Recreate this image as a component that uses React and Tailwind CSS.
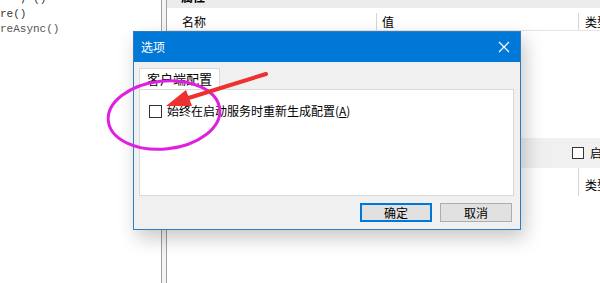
export default function App() {
  const cjk = { fontFamily: '"Noto Sans CJK SC", "Noto Sans", sans-serif' }

  return (
    <div
      className="relative w-[600px] h-[283px] overflow-hidden bg-white flex text-[12px] text-black"
      style={cjk}
    >
      {/* code editor */}
      <div className="w-[161px] shrink-0 bg-white pt-[4px] font-['Liberation_Mono',monospace] text-[11px] leading-[15px] text-[#333]">
        <div className="-mt-[12px] h-[15px] pl-[20px]">    ;   ()</div>
        <div className="h-[15px]">re()</div>
        <div className="h-[15px] text-[#555]">reAsync()</div>
      </div>

      {/* splitter */}
      <div className="w-[6px] shrink-0 border-x border-[#a0a0a0] bg-[#f4f4f4]" />

      {/* properties panel */}
      <div className="flex-1 min-w-0 flex flex-col bg-white overflow-hidden whitespace-nowrap">
        <div className="h-[8px] bg-[#ececec] overflow-hidden">
          <div className="-mt-[12px] pl-[14px] font-bold">属性</div>
        </div>
        <div className="h-[23px] flex items-center border-b border-[#e5e5e5] pt-[5px]">
          <div className="w-[210px] shrink-0 pl-[15px] border-r border-[#d5d5d5] h-full flex items-center">名称</div>
          <div className="w-[202px] shrink-0 pl-[5px] border-r border-[#d5d5d5] h-full flex items-center">值</div>
          <div className="shrink-0 pl-[6px]">类型</div>
        </div>
        <div className="h-[107px]" />
        <div className="h-[30px] bg-[#f0f0f0] flex items-center pl-[405px] gap-[6px]">
          <span className="w-[12px] h-[12px] shrink-0 border border-[#333] bg-white" />
          <span className="shrink-0">启用</span>
        </div>
        <div className="h-[28px] flex">
          <div className="w-[412px] shrink-0 border-r border-[#d5d5d5]" />
          <div className="shrink-0 pl-[6px] pt-[8px]">类型</div>
        </div>
      </div>

      {/* options dialog */}
      <div className="absolute left-[133px] top-[31px] w-[388px] h-[199px] bg-[#f0f0f0] border border-[#2f7cc4] shadow-[4px_8px_18px_rgba(0,0,0,0.22)] flex flex-col">
        <div className="h-[30px] bg-[#0078d7] flex items-center justify-between text-white pl-[7px] pr-[10px]">
          <span className="text-[12px]">选项</span>
          <svg width="12" height="12" viewBox="0 0 12 12">
            <path d="M1 1 L11 11 M11 1 L1 11" stroke="white" strokeWidth="1.2" />
          </svg>
        </div>
        <div className="flex-1 flex flex-col px-[5px] pt-[6px]">
          <div className="flex">
            <div className="h-[21px] px-[7px] flex items-center bg-white border border-b-0 border-[#d9d9d9] text-[13px]">
              客户端配置
            </div>
          </div>
          <div className="h-[107px] w-[375px] bg-white border border-[#d9d9d9] pt-[12px] pl-[9px]">
            <label className="flex items-center gap-[5px]">
              <span className="w-[13px] h-[13px] border border-[#333] bg-white" />
              <span>
                始终在启动服务时重新生成配置(<span className="underline">A</span>)
              </span>
            </label>
          </div>
          <div className="flex justify-end gap-[8px] pr-[3px] mt-[7px]">
            <button className="w-[72px] h-[19px] border-2 border-[#0078d7] bg-[#e1e1e1] text-[12px] leading-none">
              确定
            </button>
            <button className="w-[72px] h-[19px] border border-[#adadad] bg-[#e1e1e1] text-[12px] leading-none">
              取消
            </button>
          </div>
        </div>
      </div>

      {/* annotation */}
      <svg className="absolute left-0 top-0 pointer-events-none" width="600" height="283">
        <ellipse
          cx="164"
          cy="115"
          rx="56"
          ry="34"
          transform="rotate(-6 164 115)"
          fill="none"
          stroke="#e020e0"
          strokeWidth="3"
        />
        <path d="M266 74 L182 100" stroke="#ee3030" strokeWidth="4" strokeLinecap="round" />
        <polygon points="166,106 186,90 192,106" fill="#ee3030" />
      </svg>
    </div>
  )
}
